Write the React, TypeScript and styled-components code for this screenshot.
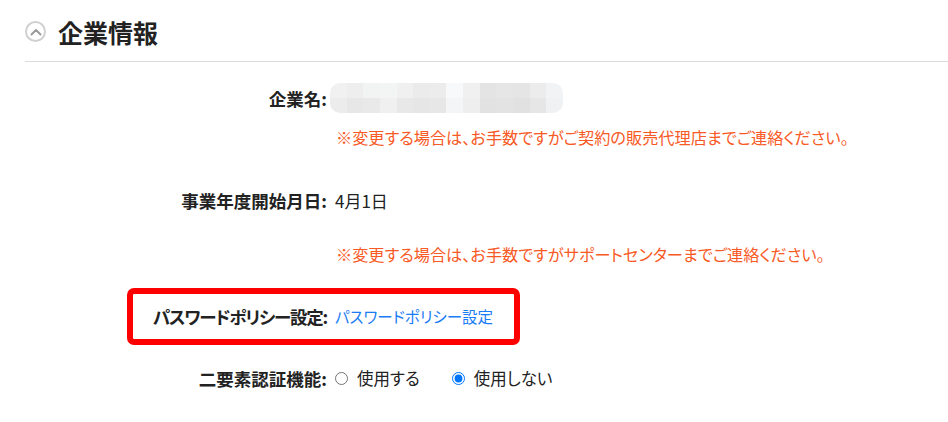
import styled, { createGlobalStyle } from "styled-components";

const GlobalStyle = createGlobalStyle`
    body {
        margin: 0;
        background: #fff;
        font-family: "Noto Sans CJK JP", "Noto Sans", sans-serif;
        font-feature-settings: "palt";
        color: #222;
    }
`;

const mosaic = [
    ["#f1f1f2", "#eeeeef", "#f2f3f3", "#f3f4f4", "#f0f0f1", "#ebebec", "#ececed", "#f8f9fa", "#f0f0f0", "#e4e4e5", "#e6e6e7", "#e5e5e6", "#ececed", "#f2f3f5"],
    ["#ececed", "#e7e7e8", "#e9e9ea", "#f0f0f1", "#e8e8e9", "#e6e6e7", "#e7e7e8", "#f4f5f6", "#eeeeef", "#e2e2e3", "#e3e3e4", "#e1e1e2", "#e6e6e7", "#f0f1f3"],
];

const CompanyInfo = () => {
    return (
        <>
            <GlobalStyle />
            <Container>
                <Header>
                    <ToggleIcon>
                        <svg width="12" height="8" viewBox="0 0 12 8">
                            <path d="M1.5 6.5 L6 2 L10.5 6.5" fill="none" stroke="#9a9a9a" strokeWidth="2" strokeLinecap="round" strokeLinejoin="round" />
                        </svg>
                    </ToggleIcon>
                    <Title>企業情報</Title>
                </Header>
                <Form>
                    <Row $top={20}>
                        <Label>企業名:</Label>
                        <Blur>
                            {mosaic.map((line, i) => (
                                <BlurLine key={i}>
                                    {line.map((c, j) => (
                                        <BlurCell key={j} $shade={c} />
                                    ))}
                                </BlurLine>
                            ))}
                        </Blur>
                    </Row>
                    <NoteRow $top={12}>
                        <Note>※変更する場合は、お手数ですがご契約の販売代理店までご連絡ください。</Note>
                    </NoteRow>
                    <Row $top={36}>
                        <Label>事業年度開始月日:</Label>
                        <Value>4月1日</Value>
                    </Row>
                    <NoteRow $top={27}>
                        <Note>※変更する場合は、お手数ですがサポートセンターまでご連絡ください。</Note>
                    </NoteRow>
                    <Row $top={35} $highlight>
                        <Label $tight>パスワードポリシー設定:</Label>
                        <Link href="#">パスワードポリシー設定</Link>
                    </Row>
                    <Row $top={30}>
                        <Label>二要素認証機能:</Label>
                        <Options>
                            <Option>
                                <Radio type="radio" name="twofa" />
                                使用する
                            </Option>
                            <Option>
                                <Radio type="radio" name="twofa" defaultChecked />
                                使用しない
                            </Option>
                        </Options>
                    </Row>
                </Form>
            </Container>
        </>
    );
};

const Container = styled.div`
    width: 100%;
    height: 422px;
    padding-left: 25px;
    box-sizing: border-box;
    overflow: hidden;
`;

const Header = styled.div`
    display: flex;
    align-items: center;
    gap: 12px;
    height: 62px;
    padding-top: 2px;
    box-sizing: border-box;
    border-bottom: 1px solid #dcdcdc;
`;

const ToggleIcon = styled.span`
    display: flex;
    align-items: center;
    justify-content: center;
    width: 21px;
    height: 21px;
    box-sizing: border-box;
    border: 2px solid #d0d0d0;
    border-radius: 50%;
`;

const Title = styled.h2`
    margin: 0;
    font-size: 25px;
    font-weight: 700;
    color: #222;
`;

const Form = styled.div`
    display: flex;
    flex-direction: column;
`;

const Row = styled.div<{ $top: number; $highlight?: boolean }>`
    position: relative;
    display: grid;
    grid-template-columns: 302px 1fr;
    column-gap: 6px;
    align-items: center;
    height: 32px;
    margin-top: ${(props) => props.$top}px;

    ${(props) =>
        props.$highlight &&
        `
        &::before {
            content: "";
            position: absolute;
            left: 102px;
            top: -12px;
            width: 393px;
            height: 57px;
            box-sizing: border-box;
            border: 6px solid #f00;
            border-radius: 7px;
        }
    `}
`;

const NoteRow = styled.div<{ $top: number }>`
    height: 22px;
    margin-top: ${(props) => props.$top}px;
    padding-left: 311px;
    display: flex;
    align-items: center;
`;

const Label = styled.div<{ $tight?: boolean }>`
    text-align: right;
    font-size: 17.5px;
    font-weight: 700;
    color: #222;
    white-space: nowrap;
    letter-spacing: ${(props) => (props.$tight ? "-1.2px" : "0")};
`;

const Value = styled.div`
    font-size: 17px;
    color: #222;
    padding-left: 2px;
`;

const Note = styled.span`
    font-size: 16.2px;
    color: #f85a26;
    white-space: nowrap;
`;

const Link = styled.a`
    font-size: 15.5px;
    color: #1a7cf5;
    text-decoration: none;
    padding-left: 2px;
    white-space: nowrap;
`;

const Blur = styled.div`
    display: flex;
    flex-direction: column;
    width: 233px;
    height: 30px;
    margin-left: -3px;
    border-radius: 10px;
    overflow: hidden;
`;

const BlurLine = styled.div`
    display: flex;
    flex: 1;
`;

const BlurCell = styled.span<{ $shade: string }>`
    flex: 1;
    background: ${(props) => props.$shade};
`;

const Options = styled.div`
    display: flex;
    align-items: center;
    gap: 30px;
`;

const Option = styled.label`
    display: flex;
    align-items: center;
    gap: 9px;
    font-size: 16.5px;
    color: #222;
`;

const Radio = styled.input`
    width: 13px;
    height: 13px;
    margin: 0 0 0 2px;
    accent-color: #0075ff;
`;

export default CompanyInfo;
